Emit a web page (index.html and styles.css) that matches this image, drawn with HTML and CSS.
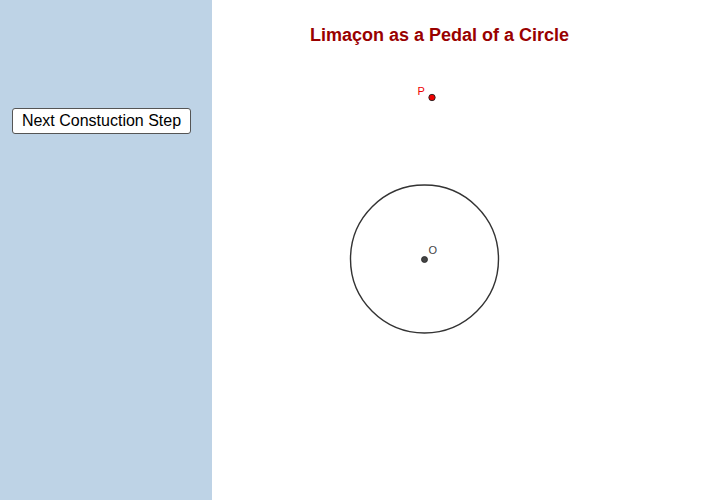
FILE: index.html
```html
<!DOCTYPE html>
<html>
<head>
<meta charset="utf-8">
<link rel="stylesheet" href="styles.css">
</head>
<body>
<div class="app">
  <aside class="sidebar">
    <button class="step-btn">Next Constuction Step</button>
  </aside>
  <main class="canvas">
    <svg class="drawing" width="496" height="500" viewBox="0 0 496 500">
      <circle cx="212.5" cy="259" r="74" fill="none" stroke="#333" stroke-width="1.4"/>
      <circle cx="212.5" cy="259.5" r="3" fill="#444" stroke="#222" stroke-width="0.8"/>
      <text x="216.5" y="253.5" class="lbl-o">O</text>
      <circle cx="220" cy="97.5" r="3.2" fill="#ee0000" stroke="#222" stroke-width="0.9"/>
      <text x="205.5" y="95" class="lbl-p">P</text>
    </svg>
    <h1 class="title">Limaçon as a Pedal of a Circle</h1>
  </main>
</div>
</body>
</html>
```
FILE: styles.css
```css
html, body {
  margin: 0;
  padding: 0;
  background: #ffffff;
  font-family: "Liberation Sans", Arial, sans-serif;
}
.app {
  display: flex;
  width: 708px;
  height: 500px;
  overflow: hidden;
}
.sidebar {
  width: 212px;
  flex: none;
  background: #bed3e6;
  padding: 108px 0 0 12px;
  box-sizing: border-box;
}
.step-btn {
  display: block;
  width: 179px;
  height: 26px;
  padding: 0;
  background: #ffffff;
  border: 1px solid #555555;
  border-radius: 3px;
  font-family: "Liberation Sans", Arial, sans-serif;
  font-size: 16px;
  color: #000000;
}
.canvas {
  position: relative;
  flex: 1;
  background: #ffffff;
}
.drawing {
  position: absolute;
  left: 0;
  top: 0;
}
.title {
  position: relative;
  margin: 0;
  padding: 25px 41px 0 0;
  text-align: center;
  font-size: 18px;
  font-weight: bold;
  color: #990000;
}
.lbl-o {
  font-family: "Liberation Sans", Arial, sans-serif;
  font-size: 11px;
  fill: #444444;
}
.lbl-p {
  font-family: "Liberation Sans", Arial, sans-serif;
  font-size: 11px;
  fill: #ee0000;
}
```
